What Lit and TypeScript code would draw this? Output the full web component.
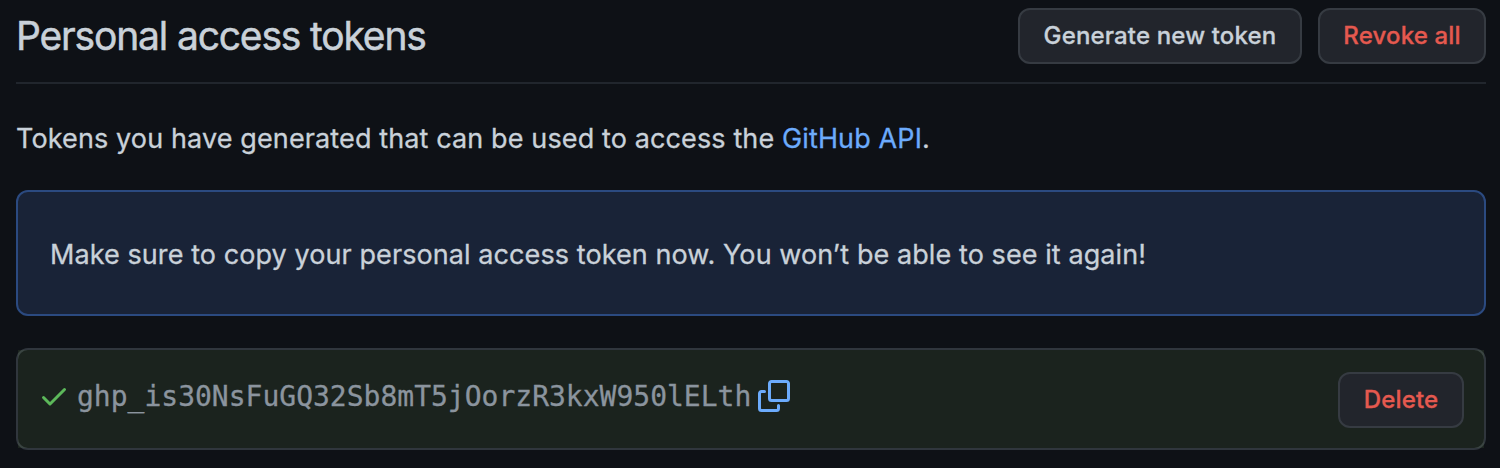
import { LitElement, html, css } from "lit";
import { customElement } from "lit/decorators.js";

@customElement("app-root")
export class AppRoot extends LitElement {
  static styles = css`
    :host {
      display: block;
      box-sizing: border-box;
      height: 468px;
      padding: 8px 14px 0 16px;
      overflow: hidden;
      background: #0e1116;
      color: #c9d1d9;
      font-family: Inter, "Liberation Sans", sans-serif;
      font-size: 27px;
      font-weight: 400;
      line-height: 42px;
      -webkit-text-stroke: 0.3px currentColor;
    }
    .header {
      display: flex;
      align-items: flex-start;
      gap: 16px;
      height: 74px;
      border-bottom: 2px solid #21262d;
    }
    h2 {
      flex: 1;
      margin: 0;
      font-size: 39px;
      font-weight: 400;
      letter-spacing: -1.17px;
      line-height: 56px;
      white-space: nowrap;
      -webkit-text-stroke-width: 0.5px;
    }
    .btn {
      box-sizing: border-box;
      height: 56px;
      padding: 0;
      border: 2px solid #363b42;
      border-radius: 12px;
      background: #22252c;
      color: #c9d1d9;
      font: 500 24px/50px Inter, "Liberation Sans", sans-serif;
      letter-spacing: 0.15px;
      text-align: center;
      white-space: nowrap;
    }
    .btn.danger { color: #e5594f; }
    .generate { width: 284px; }
    .revoke { width: 168px; }
    .delete { width: 126px; }
    .intro { margin: 34px 0 0; letter-spacing: 0.12px; white-space: nowrap; }
    a { color: #6cabfc; text-decoration: none; -webkit-text-stroke-color: #6cabfc; }
    .flash {
      box-sizing: border-box;
      height: 126px;
      margin-top: 30px;
      padding: 42px 32px 0;
      border: 2px solid #2b4a80;
      border-radius: 12px;
      background: #192337;
      letter-spacing: 0.08px;
      white-space: nowrap;
    }
    .list {
      margin-top: 32px;
      border: 2px solid #30363d;
      border-radius: 12px;
    }
    .row {
      display: flex;
      box-sizing: border-box;
      height: 98px;
      padding: 22px 20px;
      background: rgba(144, 197, 112, 0.1);
    }
    svg { display: block; width: 32px; height: 32px; margin-top: 8px; }
    .check { fill: #5cb85a; }
    .copy { margin-left: 7px; fill: #6cabfc; }
    code {
      margin-left: 7px;
      color: #8b949e;
      font: 28px/50px "DejaVu Sans Mono", monospace;
      -webkit-text-stroke-color: #8b949e;
    }
    .delete { margin-left: auto; }
  `;

  render() {
    return html`
      <div class="header">
        <h2><span class="title">Personal access tokens</span></h2>
        <button class="btn generate"><span>Generate new token</span></button>
        <button class="btn danger revoke"><span>Revoke all</span></button>
      </div>
      <p class="intro"><span>Tokens you have generated that can be used to access the <a>GitHub API</a>.</span></p>
      <div class="flash"><span>Make sure to copy your personal access token now. You won’t be able to see it again!</span></div>
      <div class="list">
        <div class="row">
          <svg class="check" viewBox="0 0 16 16"><path fill-rule="evenodd" d="M13.78 4.22a.75.75 0 010 1.06l-7.25 7.25a.75.75 0 01-1.06 0L2.22 9.28a.75.75 0 011.06-1.06L6 10.94l6.72-6.72a.75.75 0 011.06 0z"/></svg>
          <code>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</code>
          <svg class="copy" viewBox="0 0 16 16"><path fill-rule="evenodd" d="M0 6.75C0 5.784.784 5 1.75 5h1.5a.75.75 0 010 1.5h-1.5a.25.25 0 00-.25.25v7.5c0 .138.112.25.25.25h7.5a.25.25 0 00.25-.25v-1.5a.75.75 0 011.5 0v1.5A1.75 1.75 0 019.25 16h-7.5A1.75 1.75 0 010 14.25v-7.5z"/><path fill-rule="evenodd" d="M5 1.75C5 .784 5.784 0 6.75 0h7.5C15.216 0 16 .784 16 1.75v7.5A1.75 1.75 0 0114.25 11h-7.5A1.75 1.75 0 015 9.25v-7.5zm1.75-.25a.25.25 0 00-.25.25v7.5c0 .138.112.25.25.25h7.5a.25.25 0 00.25-.25v-7.5a.25.25 0 00-.25-.25h-7.5z"/></svg>
          <button class="btn danger delete"><span>Delete</span></button>
        </div>
      </div>
    `;
  }
}
